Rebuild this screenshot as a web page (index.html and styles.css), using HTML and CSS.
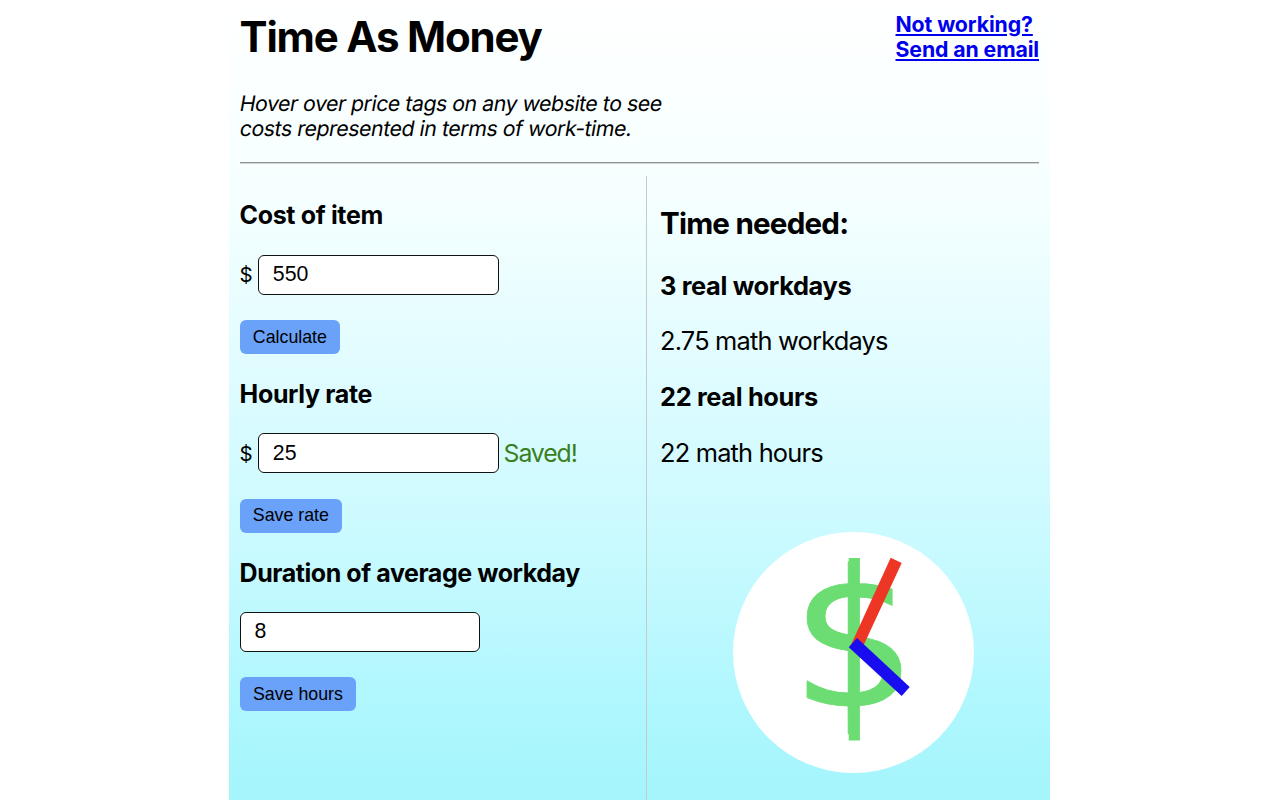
FILE: index.html
```html
<!DOCTYPE html>
<html lang="en">
<head>
<meta charset="utf-8">
<title>Time As Money</title>
<link rel="stylesheet" href="styles.css">
</head>
<body>
<main class="popup">
  <header class="header">
    <div class="intro">
      <h1 class="title">Time As Money</h1>
      <p class="tagline"><span class="line line1">Hover over price tags on any website to see</span> <span class="line line2">costs represented in terms of work-time.</span></p>
    </div>
    <a class="help" href="#">Not working?<br>Send an email</a>
  </header>
  <hr class="rule">
  <div class="columns">
    <section class="inputs">
      <div class="group">
        <h3 class="label">Cost of item</h3>
        <div class="row"><span class="dollar">$</span><input class="field" type="text" value="550"></div>
        <button class="btn btn-calc">Calculate</button>
      </div>
      <div class="group">
        <h3 class="label">Hourly rate</h3>
        <div class="row"><span class="dollar">$</span><input class="field" type="text" value="25"><span class="saved">Saved!</span></div>
        <button class="btn btn-rate">Save rate</button>
      </div>
      <div class="group">
        <h3 class="label duration">Duration of average workday</h3>
        <div class="row"><input class="field" type="text" value="8"></div>
        <button class="btn btn-hours">Save hours</button>
      </div>
    </section>
    <section class="results">
      <h2 class="needed">Time needed:</h2>
      <p class="result strong">3 real workdays</p>
      <p class="result">2.75 math workdays</p>
      <p class="result strong">22 real hours</p>
      <p class="result">22 math hours</p>
      <svg class="logo" viewBox="0 0 241 241" width="241" height="241">
        <circle cx="120.5" cy="120.5" r="120.5" fill="#fff"/>
        <text class="logo-sign" transform="translate(57.6 173.8) scale(1.056 1)">$</text>
        <rect x="115.7" y="26" width="11.2" height="182.5" fill="#6cdd72"/>
        <path fill="#ed3624" d="M157.7 25.7L168.7 31L130.7 113L117 115Z"/>
        <path fill="#190df0" d="M124 106L176.7 155L168.7 164L115.7 115.3Z"/>
      </svg>
    </section>
  </div>
</main>
</body>
</html>
```
FILE: styles.css
```css
* { box-sizing: border-box; }
body {
  margin: 0;
  background: #fff;
  color: #000;
  font-family: Inter, "Liberation Sans", sans-serif;
  overflow: hidden;
}
h1, h2, h3, p { margin: 0; }
.popup {
  width: 821px;
  height: 800px;
  margin-left: 229px;
  padding: 11px 11px 0 10.6px;
  display: flex;
  flex-direction: column;
  background: linear-gradient(#fff 0, #f5ffff 200px, #e0fcff 370px, #c8faff 550px, #b0f7fe 700px, #a4f5fc 800px);
}
.header {
  height: 151px;
  display: flex;
  justify-content: space-between;
}
.title {
  font-size: 42px;
  line-height: 52px;
  letter-spacing: -1.2px;
}
.tagline {
  margin-top: 28px;
  font-size: 21.3px;
  line-height: 25.3px;
  white-space: nowrap;
}
.line {
  display: block;
  transform: skewX(-10deg);
}
.line1 { letter-spacing: -0.47px; }
.line2 { letter-spacing: -0.44px; }
.help {
  padding-top: 1px;
  font-size: 21.3px;
  line-height: 25.3px;
  font-weight: 700;
  letter-spacing: -0.12px;
  color: #0000ee;
  text-decoration: underline;
  white-space: nowrap;
}
.rule {
  width: 799px;
  height: 2px;
  margin: 0;
  border: 0;
  border-top: 1px solid #919494;
  border-bottom: 1px solid #d0d5d5;
}
.columns {
  flex: 1;
  margin-top: 12px;
  display: flex;
}
.inputs {
  width: 407px;
  padding-top: 24px;
  border-right: 1px solid #c6caca;
}
.group { height: 178.7px; }
.label {
  height: 30px;
  margin-bottom: 24.7px;
  font-size: 25px;
  line-height: 30.4px;
  letter-spacing: -0.35px;
  white-space: nowrap;
}
.duration { letter-spacing: -0.44px; line-height: 32px; }
.row {
  height: 40px;
  margin-bottom: 25.3px;
  display: flex;
  align-items: center;
}
.dollar {
  width: 18.4px;
  font-size: 20.5px;
}
.field {
  width: 240.6px;
  height: 40px;
  padding: 0 13.8px 0.5px;
  border: 1.3px solid #111;
  border-radius: 6px;
  background: #fff;
  font: 21.3px "Liberation Sans", sans-serif;
  color: #000;
}
.saved {
  margin-left: 5px;
  font-size: 24.8px;
  letter-spacing: -1.1px;
  color: #3a7f20;
}
.btn {
  display: block;
  height: 34px;
  padding: 0.5px 0 0 0.6px;
  border: 0;
  border-radius: 6px;
  background: #6aa1f9;
  color: #000;
  font: 17.8px "Liberation Sans", sans-serif;
}
.btn-calc { width: 100px; }
.btn-rate { width: 102px; }
.btn-hours { width: 116px; }
.results {
  flex: 1;
  padding: 30px 0 0 13.4px;
  white-space: nowrap;
}
.needed {
  font-size: 29.6px;
  line-height: 35.4px;
  letter-spacing: -0.8px;
  margin-bottom: 29.1px;
}
.result {
  font-size: 25.4px;
  line-height: 30px;
  letter-spacing: -0.8px;
  margin-bottom: 25.7px;
}
.strong {
  font-weight: 700;
  letter-spacing: -0.35px;
}
.logo {
  display: block;
  overflow: visible;
  margin: 64px 0 0 73.2px;
}
.logo-sign {
  font: 189px "DejaVu Sans", sans-serif;
  fill: #6cdd72;
  stroke: #6cdd72;
  stroke-width: 0.8;
}
```
